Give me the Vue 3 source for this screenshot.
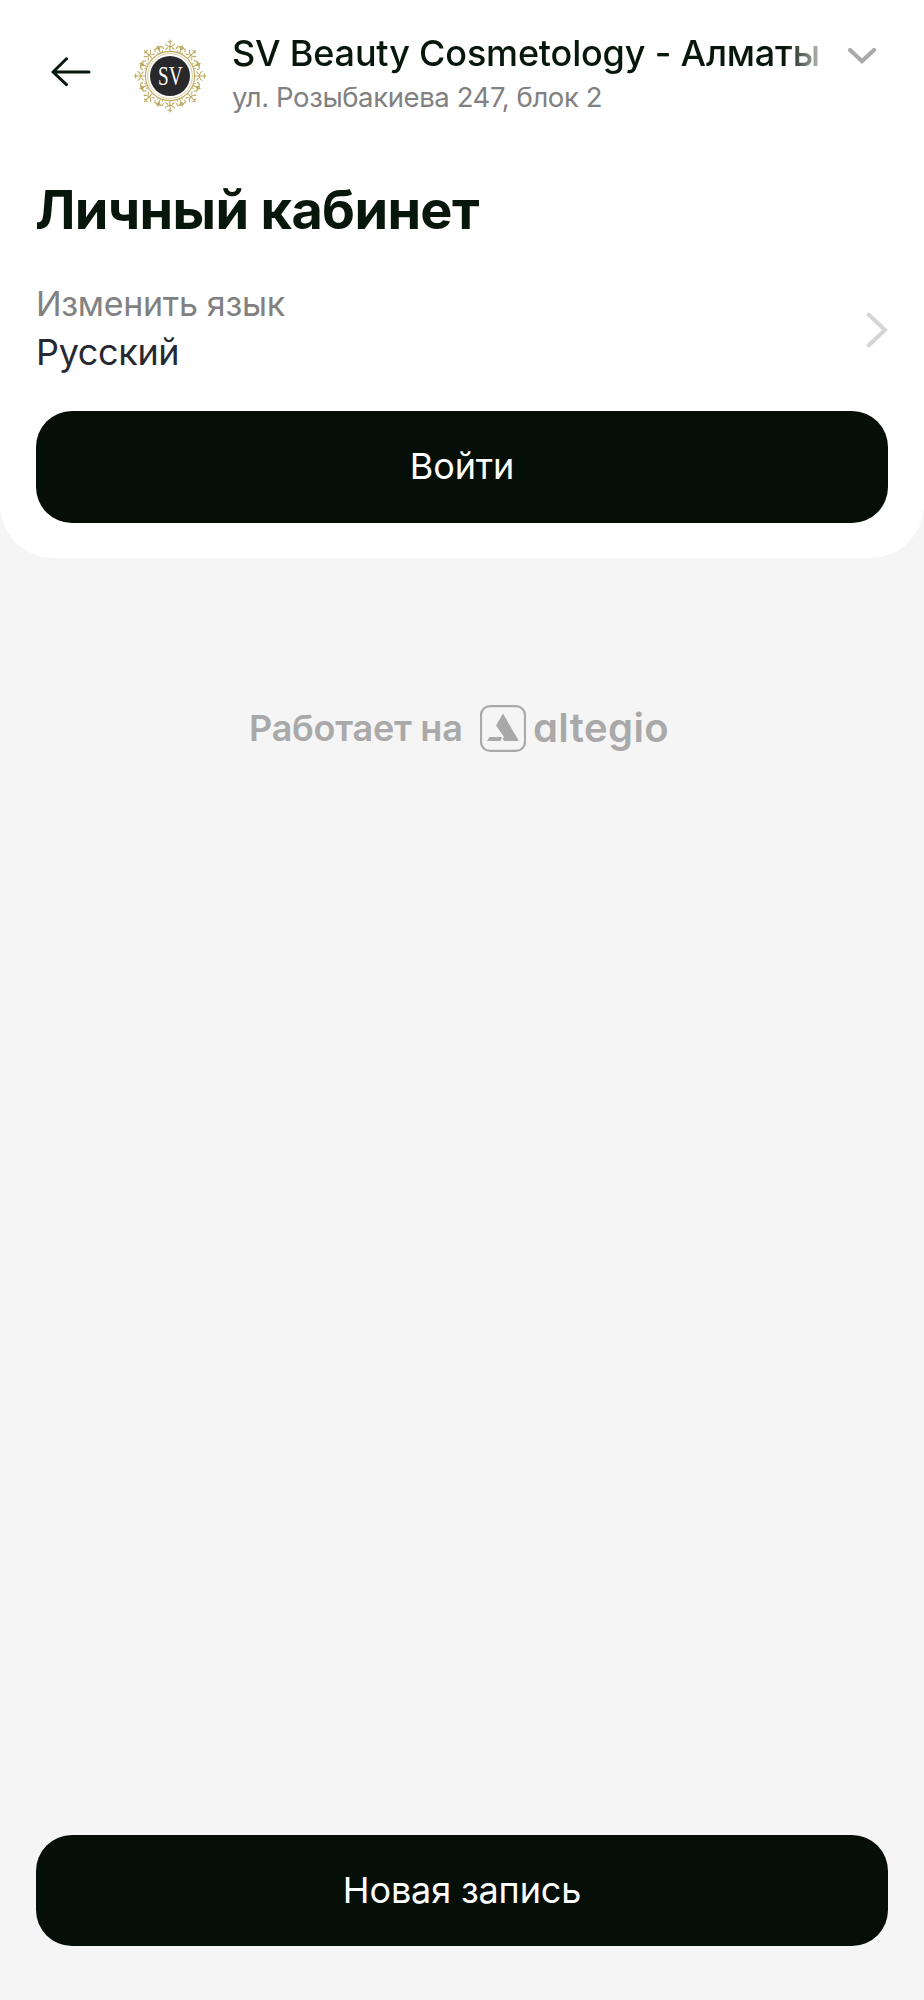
<template>
  <div class="page">
    <section class="card">
      <header class="header">
        <button class="back" aria-label="Назад">
          <svg width="40" height="30" viewBox="0 0 40 30">
            <path d="M38 15H2M15.500 1.800L2 15l13.500 12.600" />
          </svg>
        </button>

        <svg class="avatar" width="76" height="76" viewBox="-38 -38 76 76">
          <g class="ornament">
            <circle r="24.600" />
            <circle r="22.400" class="thin" />
            <g v-for="a in axes" :key="'a' + a" :transform="`rotate(${a})`">
              <path d="M0-25V-36.500M-2.400-34.300H2.400M-4.500-32.500C-4.500-29.500-1-30.500 0-28.500C1-30.500 4.500-29.500 4.500-32.500M-4.500-26.500l2.500-2M4.500-26.500l-2.500-2" />
            </g>
            <g v-for="a in diagonals" :key="'d' + a" :transform="`rotate(${a})`">
              <path d="M0-25V-33M-2-31.200H2M-4.200-27.500C-5.500-31-1.500-32 0-28C1.500-32 5.500-31 4.200-27.500M-2.500-26.500v1.500M2.500-26.500v1.500" />
            </g>
          </g>
          <circle r="20" class="disc" />
          <text class="monogram" x="-12" y="9.200" textLength="24.500" lengthAdjust="spacingAndGlyphs">SV</text>
        </svg>

        <div class="company">
          <div class="name-row">
            <span class="name">{{ company.name }}</span>
            <svg class="chevron-down" width="30" height="18" viewBox="0 0 30 18">
              <path d="M3 3l12 11.200L27 3" />
            </svg>
          </div>
          <span class="address">{{ company.address }}</span>
        </div>
      </header>

      <h1 class="title">Личный кабинет</h1>

      <div class="language">
        <div class="language-text">
          <span class="language-label">Изменить язык</span>
          <span class="language-value">Русский</span>
        </div>
        <svg class="chevron-right" width="22" height="36" viewBox="0 0 22 36">
          <path d="M1.500 1.500L19 18L1.500 34.500" />
        </svg>
      </div>

      <button class="btn">Войти</button>
    </section>

    <div class="powered">
      <span class="powered-text">Работает на</span>
      <svg class="mark" width="46" height="47" viewBox="0 0 46 47">
        <rect x="1" y="1.200" width="44" height="44.600" rx="9" />
        <path d="M23 8.500L38.800 36H24.500L22.500 34L24 32L16 20.500ZM9.500 32H22L20.500 36H7Z" />
      </svg>
      <span class="brand">altegio</span>
    </div>

    <footer class="footer">
      <button class="btn">Новая запись</button>
    </footer>
  </div>
</template>

<script setup>
const company = {
  name: 'SV Beauty Cosmetology - Алматы (Розыбакиева)',
  address: 'ул. Розыбакиева 247, блок 2'
}

// angles of the ornament elements
const axes = [0, 45, 90, 135, 180, 225, 270, 315]
const diagonals = [22.5, 67.5, 112.5, 157.5, 202.5, 247.5, 292.5, 337.5]
</script>

<style>
body {
  margin: 0;
  background: #f5f5f5;
}
</style>

<style scoped>
.page {
  display: flex;
  flex-direction: column;
  height: 2000px;
  background: #f5f5f5;
  font-family: Inter, "Noto Sans", sans-serif;
  color: #08170b;
}

button {
  border: 0;
  padding: 0;
  background: none;
  font-family: inherit;
}

.card {
  box-sizing: border-box;
  height: 558px;
  padding: 30px 36px 0;
  background: #fff;
  border-radius: 0 0 54px 54px;
}

/* header */
.header {
  display: flex;
  height: 108px;
}
.back {
  width: 96px;
  height: 83px;
  padding-left: 15px;
  text-align: left;
}
.back svg {
  display: block;
}
.back path {
  fill: none;
  stroke: #08170b;
  stroke-width: 3;
  stroke-linecap: round;
  stroke-linejoin: round;
}
.avatar {
  flex-shrink: 0;
  margin-top: 8px;
}
.ornament {
  fill: none;
  stroke: #bda95c;
  stroke-width: 1.1;
}
.ornament .thin {
  stroke-width: 0.6;
}
.disc {
  fill: #29282a;
}
.monogram {
  fill: #fff;
  font: 28px "Liberation Serif", serif;
}
.company {
  flex: 1;
  min-width: 0;
  padding-left: 24px;
}
.name-row {
  display: flex;
  height: 46px;
}
.name {
  width: 602px;
  overflow: hidden;
  white-space: nowrap;
  font-size: 36px;
  font-weight: 500;
  letter-spacing: -0.18px;
  line-height: 47px;
  -webkit-mask-image: linear-gradient(to right, #000 92%, transparent 100%);
  mask-image: linear-gradient(to right, #000 92%, transparent 100%);
}
.chevron-down {
  flex-shrink: 0;
  margin: 17px 0 0 13px;
}
.chevron-down path {
  fill: none;
  stroke: #a9a9a9;
  stroke-width: 4.2;
  stroke-linecap: round;
}
.address {
  display: block;
  font-size: 27.5px;
  letter-spacing: -0.4px;
  line-height: 43px;
  color: #818181;
}

/* account */
.title {
  margin: 40px 0 0 -1px;
  font-size: 54px;
  font-weight: 700;
  letter-spacing: -0.65px;
  line-height: 64px;
}
.language {
  display: flex;
  align-items: center;
  justify-content: space-between;
  height: 100px;
  margin: 38px 0 31px;
}
.language-text {
  display: flex;
  flex-direction: column;
  padding-bottom: 4px;
}
.language-label,
.language-value {
  line-height: 48px;
}
.language-label {
  font-size: 34px;
  letter-spacing: -0.3px;
  color: #818181;
}
.language-value {
  font-size: 36px;
  letter-spacing: -0.35px;
  color: #272932;
}
.chevron-right path {
  fill: none;
  stroke: #d5d5d5;
  stroke-width: 4;
}
.btn {
  display: block;
  width: 852px;
  height: 111.5px;
  border-radius: 36px;
  background: #050e07;
  color: #fff;
  font-size: 36px;
  letter-spacing: -0.15px;
  line-height: 111px;
}

/* powered by */
.powered {
  display: flex;
  align-items: center;
  height: 47px;
  margin: 147px 0 0 249px;
  color: #a9a9a9;
}
.powered-text {
  width: 231px;
  padding-bottom: 2px;
  font-size: 36px;
  font-weight: 600;
  letter-spacing: -0.25px;
  white-space: nowrap;
}
.mark rect {
  fill: none;
  stroke: #a9a9a9;
  stroke-width: 2.2;
}
.mark path {
  fill: #a9a9a9;
}
.brand {
  margin-left: 7px;
  padding-bottom: 2px;
  font-size: 40px;
  font-weight: 600;
  letter-spacing: 0.4px;
  font-feature-settings: "cv11";
}

.footer {
  margin-top: auto;
  padding: 0 36px 54px;
}
</style>
